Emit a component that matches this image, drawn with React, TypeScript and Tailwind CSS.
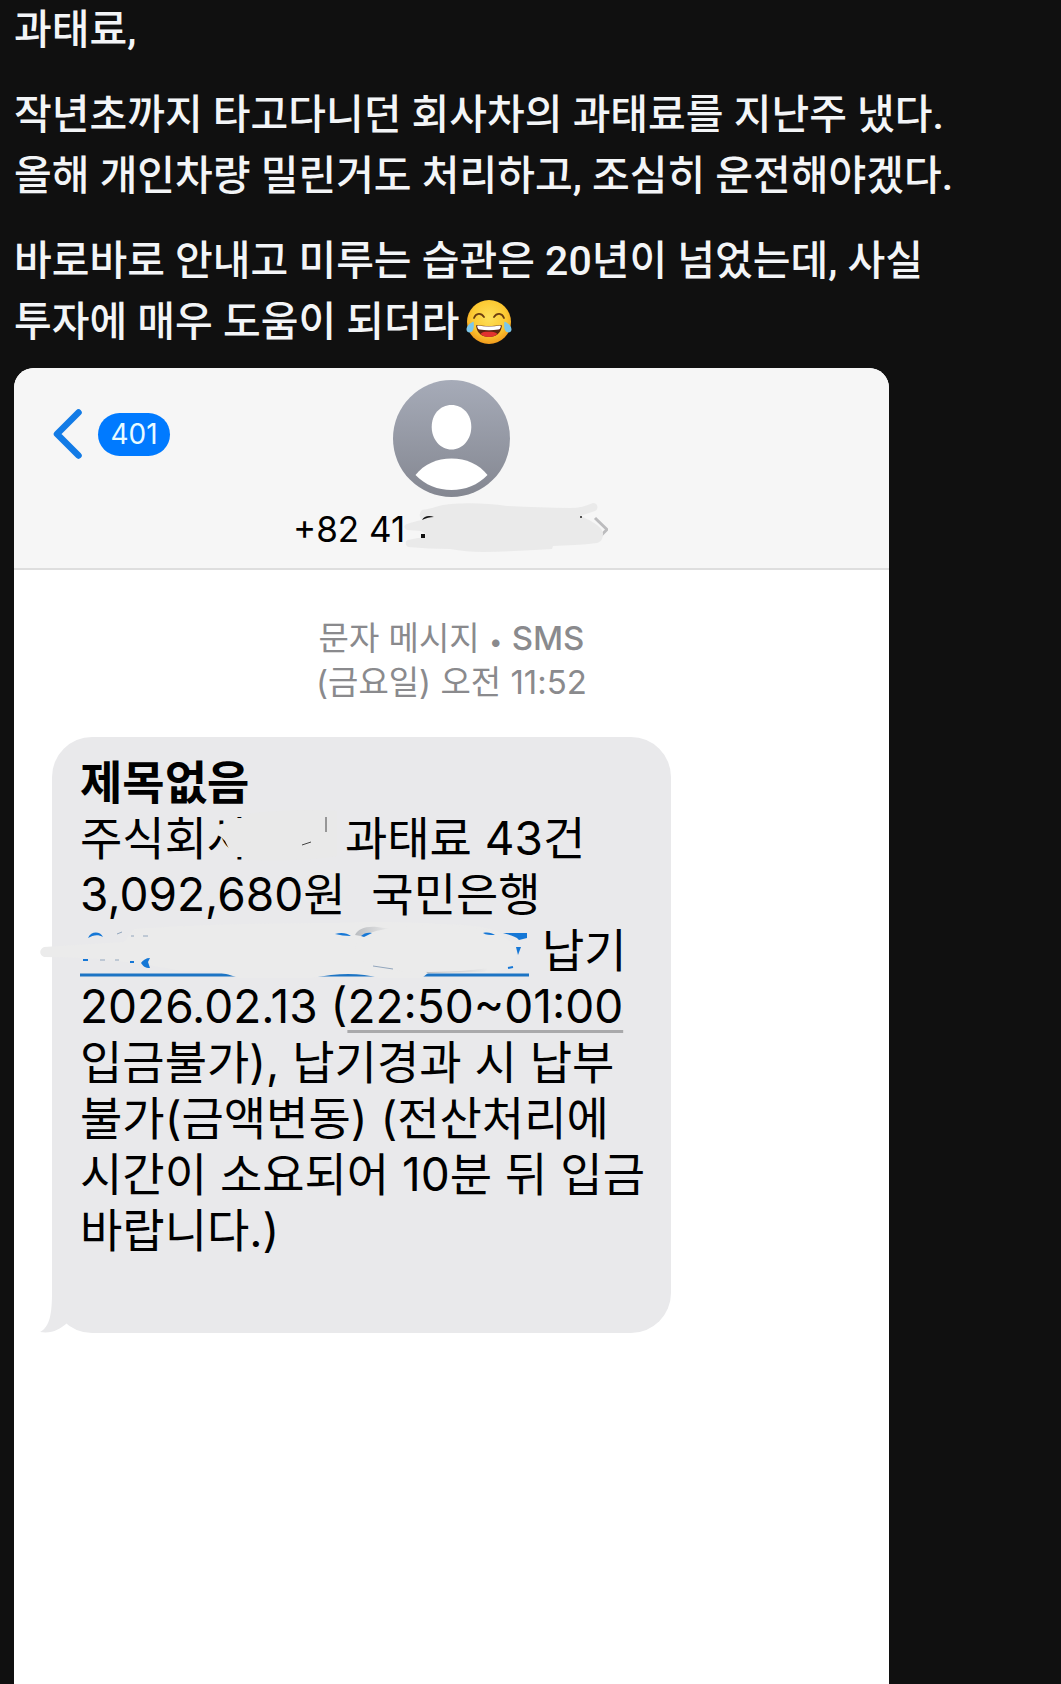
const paragraphs = [
  ["과태료,"],
  ["작년초까지 타고다니던 회사차의 과태료를 지난주 냈다.", "올해 개인차량 밀린거도 처리하고, 조심히 운전해야겠다."],
  ["바로바로 안내고 미루는 습관은 20년이 넘었는데, 사실", "투자에 매우 도움이 되더라"],
];

const JoyEmoji = () => (
  <svg viewBox="0 0 46 46" className="ml-1.5 inline-block size-[46px] align-[-9px]" role="img" aria-label="joy">
    <defs>
      <radialGradient id="face" cx="0.5" cy="0.4" r="0.6">
        <stop offset="0" stopColor="#fde05a" />
        <stop offset="0.65" stopColor="#fcc932" />
        <stop offset="1" stopColor="#f19a1c" />
      </radialGradient>
    </defs>
    <circle cx="23" cy="23" r="22" fill="url(#face)" />
    <path d="M8 19c2-5 7-5.500 10-1M28 18c3-4.500 8-4 10 1" fill="none" stroke="#6b3d10" strokeWidth="1.800" strokeLinecap="round" />
    <path d="M11.500 26c7 1.500 16 1.500 23 0 .9-.2 1.500.5 1.300 1.500C34.800 34 30 38 23 38s-11.800-4-12.800-10.500c-.2-1 .4-1.700 1.300-1.500z" fill="#5b2410" />
    <path d="M12 26.500c7 1.400 15 1.400 22 0 .6 0 1 .5.800 1.100-.4 1.800-1.200 2.900-2.300 2.900-6 .9-13 .9-19 0-1.100 0-1.900-1.100-2.300-2.900-.2-.6.200-1.100.800-1.100z" fill="#fff" />
    <path d="M14.500 35c2-2.500 5.500-2.300 8.500-2.300s6.500 0 8.500 2.300c-2 2-5 3-8.500 3s-6.500-1-8.500-3z" fill="#e2322f" />
    <path d="M7.500 22.500C4 24 .5 27 .5 30.500c0 3 4 4 6 1.500 1.600-2 1.600-6.500 1-9.500zM38.500 22.500c3.500 1.500 7 4.500 7 8 0 3-4 4-6 1.500-1.600-2-1.600-6.500-1-9.500z" fill="#7cc7ea" />
  </svg>
);

const Avatar = () => (
  <svg viewBox="0 0 117 117" className="size-[117px]" aria-hidden="true">
    <defs>
      <linearGradient id="avatar" x1="0" y1="0" x2="0" y2="1">
        <stop offset="0" stopColor="#a6abb8" />
        <stop offset="1" stopColor="#848791" />
      </linearGradient>
    </defs>
    <circle cx="58.500" cy="58.500" r="58.500" fill="url(#avatar)" />
    <path d="M58.500 25c11.500 0 19.800 9.500 19.800 22S69.500 69.500 58.500 69.500 38.700 59.500 38.700 47 47 25 58.500 25z" fill="#fff" />
    <path d="M22.500 95C31 84 44 78.500 58.500 78.500S86 84 94.500 95C85 105 72 110 58.500 110S32 105 22.500 95z" fill="#fff" />
  </svg>
);

// Marker stroke hiding the rest of the number, with the disclosure arrow beside it
const PhoneMask = () => (
  <svg viewBox="0 0 313 54" className="absolute right-0.5 top-0 h-[54px] w-[313px]" aria-hidden="true">
    <path d="M300 16l12 11.500-6 6" fill="none" stroke="#bcbcbe" strokeWidth="3" strokeLinejoin="round" />
    <path d="M127 18c-3-3-3-7 0-10 8-1 12-3 21-5 12-2 40-3 64 1 22 1 42 2 63 2 9 0 16-2 23-5 5 0 6 6 2 8l-15 5c8 3 22 10 23 17 0 6-2 9-6 10-14 2-30 2-44 3l-1 3c-23 1-46 3-69 3-12 0-22-1-33-3-14 0-28-1-42-2-3-2-3-6 0-7l10-2h5l3-4-5-3-14-1c-4-2-3-5 0-6 5-2 10-3 15-4z" fill="#eaeaea" />
    <path d="M127 18c2-4 7-5 12-3-4 0-8 1-12 3z" fill="#111" />
    <path d="M126 32h4v4h-4z" fill="#111" />
    <path d="M285 15h2" stroke="#555" strokeWidth="2" />
  </svg>
);

const NameMask = () => (
  <svg viewBox="0 0 138 56" className="absolute left-0 top-0 h-[56px] w-[138px]" aria-hidden="true">
    <path d="M4 16l16-3 6-5h14V4c30-4 60-5 90-3v45c-30 5-60 5-90 4l-4-3h-9l-5-8-4-8-4-4-4-2-6 3z" fill="#e9e9e9" />
    <path d="M119 7v15M95 35l9-3" stroke="#444" fill="none" />
  </svg>
);

// Account number line, fully scribbled over
const AccountMask = () => (
  <svg viewBox="0 0 449 56" className="inline-block h-[56px] w-[449px] overflow-visible align-top" role="img" aria-label="계좌번호">
    <defs>
      <linearGradient id="smudge" x1="0" y1="0" x2="1" y2="0">
        <stop offset="0" stopColor="#b9bcc0" />
        <stop offset="1" stopColor="#ebebeb" />
      </linearGradient>
    </defs>
    <path d="M0 53h449" stroke="#1c74c4" strokeWidth="3" />
    <path d="M-36 25c26-2 52-3 80-5l10-13c70-5 140-6 200-6 40-2 80-1 130 2 20 2 30 4 36 8l16 16-6 18-16 6h-66l-6 5h-43c-14-4-30-5-48-3l-20 3h-72c-18-7-36-8-58-7-50-10-90-14-137-14-5-2-5-8 0-10z" fill="#ebebeb" />
    <path d="M275 13c3-6 10-9 22-8l14 2-25 8z" fill="url(#smudge)" />
    <path d="M345 48c20 2 44 1 64-3l-4 5-58 1z" fill="url(#smudge)" />
    <path d="M282 15c18-14 110-16 136-3 22 10 24 24 8 31-34 8-108 10-136 1-16-8-20-20-8-29z" fill="#ebebeb" />
    <path d="M8 16c3-7 12-7 15-1-5-3-10-2-15 1zM255 12c6-2 12-1 16 2-6 0-11-1-16-2zM281 14c3-3 7-4 11-3l-8 4zM403 11c5-1 9 0 12 2-5 0-9 0-12-2zM423 11h24v5l-8 2c-3-4-10-5-16-7zM436 25h5l-3 8zM61 41c2-3 5-5 9-5l-2 4 2 6c-5 0-7-2-9-5z" fill="#1577d6" />
    <path d="M3 38h5M50 40h4M428 46l5-1" stroke="#1577d6" strokeWidth="2" />
    <path d="M20 38h5M35 38h4M37 12l5-2M51 14h3M63 14h5M293 44l20 3" stroke="#92a6bd" fill="none" />
  </svg>
);

export default function App() {
  return (
    <div className="flex min-h-screen flex-col bg-[#101010] pl-[14px] font-['Roboto','Noto_Sans_CJK_KR',sans-serif] text-[#f3f5f7]">
      <div className="flex flex-col gap-6 text-[41px] font-medium leading-[61px]">
        {paragraphs.map((lines, index) => (
          <p key={index} className="whitespace-nowrap">
            {lines.map((line, i) => (
              <span key={i} className="block">
                {line}
                {index === 2 && i === 1 && <JoyEmoji />}
              </span>
            ))}
          </p>
        ))}
      </div>

      <section className="mr-[172px] mt-[15px] flex flex-1 flex-col overflow-hidden rounded-t-[20px] bg-white font-['Inter','Noto_Sans_CJK_KR',sans-serif] text-black">
        <header className="grid grid-cols-[1fr_auto_1fr] border-b-2 border-[#dedede] bg-[#f6f6f6] pb-3 pt-3">
          <button className="ml-[39px] mt-[28px] flex items-center gap-4 self-start justify-self-start">
            <svg viewBox="0 0 29 52" className="h-[52px] w-[29px]" aria-hidden="true">
              <path d="M25.500 4.500L4 26l21.500 21.500" fill="none" stroke="#127be6" strokeWidth="6.500" strokeLinecap="round" strokeLinejoin="round" />
            </svg>
            <span className="flex h-[43px] w-[72px] items-center justify-center rounded-full bg-[#007aff] text-[28px] text-[#e8fbff]">401</span>
          </button>
          <div className="flex flex-col items-center gap-[5px]">
            <Avatar />
            <button className="relative h-[54px] w-[317px] text-left text-[35px] leading-[54px]">
              +82 41
              <PhoneMask />
            </button>
          </div>
        </header>

        <div className="mt-[46px] text-center text-[33px] leading-[44px] text-[#8a8a8d]">
          <p>
            문자 메시지 <span className="text-[24px] leading-none">•</span> <span className="font-medium">SMS</span>
          </p>
          <p>(금요일) 오전 11:52</p>
        </div>

        <div className="relative ml-[38px] mt-[33px] w-[619px] whitespace-nowrap rounded-[40px] bg-[#e9e9eb] px-7 pb-[75px] pt-[17px] text-[46px] leading-[56px]">
          <svg viewBox="0 0 42 40" className="absolute -left-[12px] bottom-0 h-[40px] w-[42px]" aria-hidden="true">
            <path d="M12 0c0 20-2 34-12 39 12 2 20-3 26-8l14-15z" fill="#e9e9eb" />
          </svg>
          <h2 className="font-bold">제목없음</h2>
          <p className="flex">
            <span>주식회</span>
            <span className="relative w-[138px]">
              사
              <NameMask />
            </span>
            <span>과태료 43건</span>
          </p>
          <p className="whitespace-pre">3,092,680원  국민은행</p>
          <p>
            <AccountMask /> 납기
          </p>
          <p>
            2026.02.13 (<span className="underline decoration-[#a9a9ab] decoration-[3px] underline-offset-[7px]">22:50~01:00</span>
          </p>
          <p>입금불가), 납기경과 시 납부</p>
          <p>불가(금액변동) (전산처리에</p>
          <p>시간이 소요되어 10분 뒤 입금</p>
          <p>바랍니다.)</p>
        </div>
      </section>
    </div>
  );
}
